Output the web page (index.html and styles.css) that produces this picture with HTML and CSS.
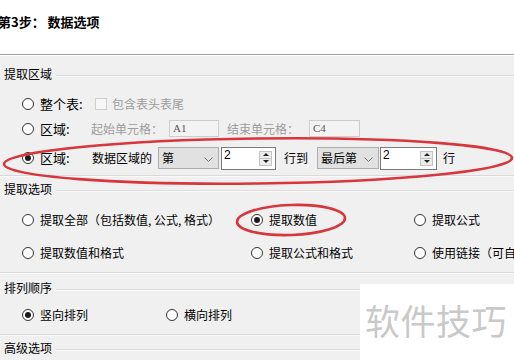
FILE: index.html
```html
<!DOCTYPE html>
<html lang="zh-CN">
<head>
  <meta charset="UTF-8">
  <title>第3步： 数据选项</title>
  <link rel="stylesheet" href="styles.css">
</head>
<body>
  <!-- 向导标题 -->
  <header class="step-head">
    <h1 class="step-title">第3步： 数据选项</h1>
  </header>

  <main class="panel">
    <!-- 提取区域 -->
    <section class="group group--area">
      <div class="legend"><span>提取区域</span></div>
      <div class="row row--whole">
        <label class="opt opt--w73"><span class="radio"></span><span class="opt-big">整个表:</span></label>
        <span class="check-wrap is-disabled"><span class="check"></span>包含表头表尾</span>
      </div>
      <div class="row row--range">
        <label class="opt opt--w69"><span class="radio"></span><span class="opt-big">区域:</span></label>
        <span class="is-disabled">起始单元格：</span>
        <span class="cell cell--a">A1</span>
        <span class="is-disabled gap-l8">结束单元格：</span>
        <span class="cell cell--b">C4</span>
      </div>
      <div class="row row--rows">
        <label class="opt opt--w70"><span class="radio is-on"></span><span class="opt-big">区域:</span></label>
        <span>数据区域的</span>
        <div class="select select--first"><span>第</span><svg class="chev" width="9" height="5" viewBox="0 0 9 5"><polyline points="0.5,0.5 4.5,4.5 8.5,0.5" fill="none" stroke="#707070" stroke-width="1"/></svg></div>
        <div class="spin spin--first">
          <span class="spin-val">2</span>
          <span class="spin-btns"><i class="arr arr--up"></i><i class="arr arr--down"></i></span>
        </div>
        <span class="to-text">行到</span>
        <div class="select select--last"><span>最后第</span><svg class="chev" width="9" height="5" viewBox="0 0 9 5"><polyline points="0.5,0.5 4.5,4.5 8.5,0.5" fill="none" stroke="#707070" stroke-width="1"/></svg></div>
        <div class="spin spin--last">
          <span class="spin-val">2</span>
          <span class="spin-btns"><i class="arr arr--up"></i><i class="arr arr--down"></i></span>
        </div>
        <span class="row-text">行</span>
      </div>
    </section>

    <!-- 提取选项 -->
    <section class="group group--extract">
      <div class="legend"><span>提取选项</span></div>
      <div class="opts opts--three">
        <label class="opt"><span class="radio"></span>提取全部（包括数值, 公式, 格式）</label>
        <label class="opt"><span class="radio is-on"></span>提取数值</label>
        <label class="opt"><span class="radio"></span>提取公式</label>
        <label class="opt"><span class="radio"></span>提取数值和格式</label>
        <label class="opt"><span class="radio"></span>提取公式和格式</label>
        <label class="opt"><span class="radio"></span>使用链接（可自动更新）</label>
      </div>
    </section>

    <!-- 排列顺序 -->
    <section class="group group--order">
      <div class="legend"><span>排列顺序</span></div>
      <div class="opts opts--two">
        <label class="opt"><span class="radio is-on"></span>竖向排列</label>
        <label class="opt"><span class="radio"></span>横向排列</label>
      </div>
    </section>

    <!-- 高级选项 -->
    <section class="group group--adv">
      <div class="legend"><span>高级选项</span></div>
    </section>
  </main>

  <!-- 红色标注圈 -->
  <svg class="marks" width="514" height="360" viewBox="0 0 514 360">
    <ellipse cx="258" cy="161" rx="254" ry="22.5" transform="rotate(-0.7 258 161)" fill="none" stroke="#d8363d" stroke-width="2.6"/>
    <ellipse cx="291" cy="220" rx="54" ry="15" transform="rotate(-2 291 220)" fill="none" stroke="#d8363d" stroke-width="2.6"/>
  </svg>

  <!-- 水印 -->
  <div class="watermark">软件技巧</div>
</body>
</html>
```

FILE: styles.css
```css
body {
  margin: 0;
  width: 514px;
  height: 360px;
  overflow: hidden;
  position: relative;
  background: #f0f0f0;
  font-family: "Noto Sans CJK SC", "Noto Sans", sans-serif;
  font-size: 12px;
  color: #000;
}
/* 标题栏 */
.step-head {
  height: 55px;
  background: #fff;
  border-bottom: 1px solid #a0a0a0;
  box-sizing: border-box;
  padding-top: 14px;
}
.step-title {
  margin: 0 0 0 -2px;
  font-size: 13px;
  font-weight: 700;
  line-height: 16px;
  white-space: nowrap;
}
.panel {
  border-top: 1px solid #fff;
  padding-top: 10px;
}
/* 分组框 */
.group {
  border-bottom: 1px solid #d9d9d9;
  box-shadow: 0 1px 0 #fafafa;
}
.group--area {
  padding-bottom: 0;
}
.group--extract {
  margin-top: 5px;
  padding-bottom: 3px;
}
.group--order {
  margin-top: 7px;
  padding-bottom: 5px;
}
.group--adv {
  margin-top: 5px;
  border-bottom: none;
  box-shadow: none;
}
.legend {
  display: flex;
  align-items: center;
  height: 16px;
  line-height: 16px;
  white-space: nowrap;
}
.legend span {
  padding: 0 4px;
}
.legend::after {
  content: "";
  flex: 1;
  height: 1px;
  margin-top: 2px;
  background: #dcdcdc;
  box-shadow: 0 1px 0 #fafafa;
}
/* 行 */
.row {
  display: flex;
  align-items: center;
  padding-left: 22px;
  white-space: nowrap;
  line-height: 16px;
}
.row--whole {
  margin-top: 9px;
  height: 25px;
}
.row--range {
  height: 25px;
}
.row--rows {
  height: 34px;
}
.opt {
  display: flex;
  align-items: center;
  white-space: nowrap;
}
.opt--w73 { width: 73px; }
.opt--w69 { width: 69px; }
.opt--w70 { width: 70px; }
.opt-big {
  font-size: 13px;
}
/* 单选框 */
.radio {
  width: 12px;
  height: 12px;
  box-sizing: border-box;
  border: 1px solid #333;
  border-radius: 50%;
  background: #fff;
  margin-right: 6px;
  flex: none;
  display: flex;
  align-items: center;
  justify-content: center;
}
.radio.is-on::after {
  content: "";
  width: 6px;
  height: 6px;
  border-radius: 50%;
  background: #1a1a1a;
}
/* 复选框 */
.check-wrap {
  display: flex;
  align-items: center;
}
.check {
  width: 12px;
  height: 12px;
  box-sizing: border-box;
  border: 1px solid #cfcfcf;
  background: #f6f6f6;
  margin-right: 5px;
}
.is-disabled {
  color: #9d9d9d;
}
.gap-l8 {
  margin-left: 8px;
}
/* 单元格输入框 */
.cell {
  height: 17px;
  box-sizing: border-box;
  border: 1px solid #cdcdcd;
  background: #f3f3f3;
  padding-left: 3px;
  font-family: "Liberation Serif", serif;
  font-size: 11px;
  line-height: 15px;
  color: #555;
}
.cell--a {
  width: 50px;
  margin-left: 6px;
}
.cell--b {
  width: 51px;
  margin-left: 10px;
}
/* 下拉框 */
.select {
  height: 22px;
  box-sizing: border-box;
  border: 1px solid #acacac;
  background: #e1e1e1;
  display: flex;
  align-items: center;
  justify-content: space-between;
  padding: 0 5px 0 3px;
}
.select--first {
  width: 61px;
  margin-left: 6px;
}
.select--last {
  width: 62px;
  margin-left: 9px;
}
.chev {
  margin-top: 2px;
}
/* 数字微调框 */
.spin {
  height: 23px;
  box-sizing: border-box;
  border: 1px solid #7a7a7a;
  background: #fff;
  display: flex;
  margin-left: 2px;
}
.spin--first { width: 55px; }
.spin--last { width: 57px; margin-left: 1px; }
.spin-val {
  flex: 1;
  padding-left: 2px;
  font-family: "Liberation Sans", sans-serif;
  font-size: 12px;
  line-height: 14px;
}
.spin-btns {
  width: 11px;
  margin: 3px 3px 3px 0;
  border: 1px solid #c4c4c4;
  background: #ececec;
  display: flex;
  flex-direction: column;
}
.arr {
  flex: 1;
  display: flex;
  align-items: center;
  justify-content: center;
}
.arr--up {
  border-bottom: 1px solid #c4c4c4;
}
.arr--up::after {
  content: "";
  border-left: 3px solid transparent;
  border-right: 3px solid transparent;
  border-bottom: 3px solid #222;
}
.arr--down::after {
  content: "";
  border-left: 3px solid transparent;
  border-right: 3px solid transparent;
  border-top: 3px solid #222;
}
.to-text {
  margin-left: 8px;
}
.row-text {
  margin-left: 6px;
}
/* 选项网格 */
.opts {
  display: grid;
  padding-left: 22px;
  white-space: nowrap;
  line-height: 16px;
}
.opts--three {
  grid-template-columns: 229px 163px 1fr;
  grid-template-rows: 34px 32px;
  margin-top: 6px;
}
.opts--two {
  grid-template-columns: 144px 1fr;
  grid-template-rows: 28px;
  margin-top: 5px;
}
/* 标注与水印 */
.marks {
  position: absolute;
  left: 0;
  top: 0;
  pointer-events: none;
}
.watermark {
  position: absolute;
  left: 360px;
  top: 284px;
  right: 0;
  bottom: 0;
  background: #fff;
  padding: 16px 0 0 5px;
  font-size: 35px;
  line-height: 40px;
  letter-spacing: 0.5px;
  color: #c9c9c9;
  white-space: nowrap;
}
```
